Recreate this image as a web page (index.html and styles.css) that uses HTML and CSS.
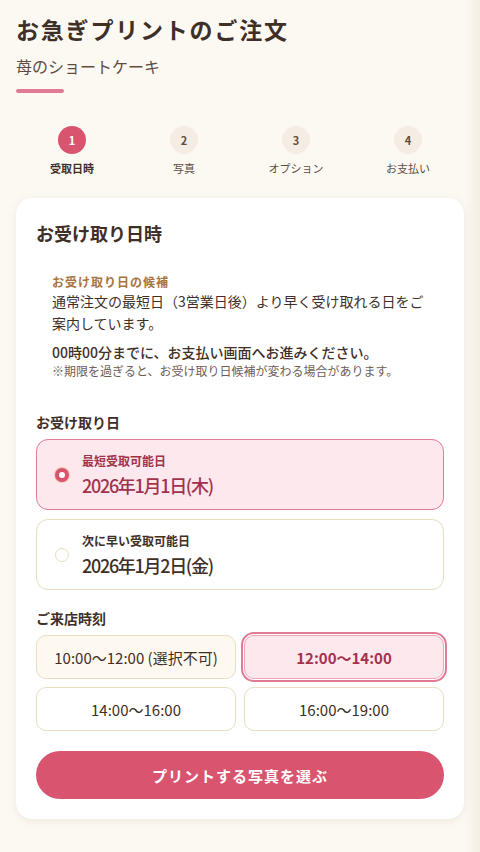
FILE: index.html
```html
<!DOCTYPE html>
<html lang="ja">
<head>
  <meta charset="UTF-8" />
  <title>お急ぎプリントのご注文</title>
  <meta name="viewport" content="width=device-width, initial-scale=1.0" />
  <link rel="stylesheet" href="styles.css">
</head>
<body>
  <main class="page">
    <header class="page-head">
      <h1>お急ぎプリントのご注文</h1>
      <p class="subtitle">苺のショートケーキ</p>
      <span class="accent-bar"></span>
    </header>

    <ol class="steps">
      <li class="step active"><span class="step-num">1</span><span class="step-label">受取日時</span></li>
      <li class="step"><span class="step-num">2</span><span class="step-label">写真</span></li>
      <li class="step"><span class="step-num">3</span><span class="step-label">オプション</span></li>
      <li class="step"><span class="step-num">4</span><span class="step-label">お支払い</span></li>
    </ol>

    <section class="card">
      <h2 class="card-title">お受け取り日時</h2>

      <div class="info">
        <p class="info-label">お受け取り日の候補</p>
        <p class="info-text">通常注文の最短日（3営業日後）より早く受け取れる日をご案内しています。</p>
        <p class="info-deadline">00時00分までに、お支払い画面へお進みください。</p>
        <p class="info-note">※期限を過ぎると、お受け取り日候補が変わる場合があります。</p>
      </div>

      <h3 class="field-label">お受け取り日</h3>
      <div class="date-list">
        <label class="date-option selected">
          <span class="radio"></span>
          <span class="date-body">
            <span class="date-kind">最短受取可能日</span>
            <span class="date-value">2026年1月1日(木)</span>
          </span>
        </label>
        <label class="date-option">
          <span class="radio"></span>
          <span class="date-body">
            <span class="date-kind">次に早い受取可能日</span>
            <span class="date-value">2026年1月2日(金)</span>
          </span>
        </label>
      </div>

      <h3 class="field-label time-label">ご来店時刻</h3>
      <div class="time-grid">
        <button class="slot disabled">10:00〜12:00 (選択不可)</button>
        <button class="slot selected">12:00〜14:00</button>
        <button class="slot">14:00〜16:00</button>
        <button class="slot">16:00〜19:00</button>
      </div>

      <button class="primary-btn">プリントする写真を選ぶ</button>
    </section>
  </main>
</body>
</html>
```

FILE: styles.css
```css
:root {
  --bg-color: #fcf9f3;
  --text-color: #3f2f27;
  --sub-text: #5f4d43;
  --pink: #d9546f;
  --pink-line: #e07a95;
  --pink-soft: #fce8ed;
  --pink-dark: #a3324f;
  --beige-line: #ecdcc0;
  --brown-label: #a8743f;
}

* {
  box-sizing: border-box;
  margin: 0;
  padding: 0;
}

html, body {
  min-height: 100%;
}

body {
  background: linear-gradient(to right, var(--bg-color) calc(100% - 15px), #f3ede3 100%);
  color: var(--text-color);
  font-family: "Noto Sans CJK JP", "Noto Sans", sans-serif;
  min-height: 100vh;
}

.page {
  padding: 12px 16px 32px;
}

.page-head h1 {
  font-size: 23px;
  line-height: 34px;
  font-weight: 700;
  letter-spacing: 1.8px;
}

.subtitle {
  margin-top: 8px;
  font-size: 16px;
  line-height: 24px;
  color: var(--sub-text);
}

.accent-bar {
  display: block;
  width: 48px;
  height: 4px;
  margin-top: 11px;
  border-radius: 2px;
  background-color: var(--pink-line);
}

.steps {
  list-style: none;
  display: grid;
  grid-template-columns: repeat(4, 1fr);
  margin-top: 33px;
}

.step {
  display: flex;
  flex-direction: column;
  align-items: center;
  gap: 6px;
}

.step-num {
  width: 28px;
  height: 28px;
  border-radius: 50%;
  background-color: #f5ece4;
  color: var(--sub-text);
  font-size: 11px;
  font-weight: 700;
  display: flex;
  align-items: center;
  justify-content: center;
}

.step-label {
  font-size: 11px;
  line-height: 16px;
  color: var(--sub-text);
}

.step.active .step-num {
  background-color: var(--pink);
  color: #fff;
}

.step.active .step-label {
  font-weight: 700;
  color: var(--text-color);
}

.card {
  margin-top: 22px;
  background-color: #fff;
  border-radius: 16px;
  padding: 22px 20px 20px;
  box-shadow: 0 2px 8px rgba(120, 90, 60, 0.1);
}

.card-title {
  font-size: 18px;
  line-height: 26px;
  font-weight: 700;
}

.info {
  margin-top: 12px;
  padding: 16px;
}

.info-label {
  font-size: 12px;
  line-height: 16px;
  font-weight: 700;
  letter-spacing: 1px;
  color: var(--brown-label);
}

.info-text {
  font-size: 14px;
  line-height: 22px;
}

.info-deadline {
  margin-top: 7px;
  font-size: 14px;
  line-height: 22px;
  font-weight: 500;
}

.info-note {
  font-size: 12px;
  line-height: 16px;
  color: #6f5d52;
}

.field-label {
  margin-top: 17px;
  font-size: 14px;
  line-height: 20px;
  font-weight: 700;
}

.date-list {
  margin-top: 7px;
  display: flex;
  flex-direction: column;
  gap: 9px;
}

.date-option {
  display: flex;
  align-items: center;
  gap: 13px;
  height: 71px;
  padding: 0 18px;
  border: 1px solid var(--beige-line);
  border-radius: 12px;
  background-color: #fff;
}

.radio {
  flex: none;
  width: 14px;
  height: 14px;
  border-radius: 50%;
  border: 1px solid var(--beige-line);
  background-color: #fff;
}

.date-body {
  display: flex;
  flex-direction: column;
  gap: 2px;
  padding-top: 1px;
}

.date-kind {
  font-size: 12px;
  line-height: 18px;
  font-weight: 700;
}

.date-value {
  font-size: 18px;
  line-height: 26px;
  font-weight: 500;
  letter-spacing: -1.3px;
}

.date-option.selected {
  background-color: var(--pink-soft);
  border-color: var(--pink-line);
  color: var(--pink-dark);
}

.date-option.selected .radio {
  border: 4px solid var(--pink);
  box-shadow: 0 0 0 1px #f0c7b4;
}

.time-label {
  margin-top: 18px;
}

.time-grid {
  margin-top: 7px;
  display: grid;
  grid-template-columns: 1fr 1fr;
  gap: 8px;
}

.slot {
  height: 44px;
  border: 1px solid var(--beige-line);
  border-radius: 10px;
  background-color: #fff;
  color: var(--text-color);
  font-family: inherit;
  font-size: 15px;
}

.slot.disabled {
  background-color: #fdf9f1;
}

.slot.selected {
  background-color: var(--pink-soft);
  border-color: #eea5b6;
  color: var(--pink-dark);
  font-weight: 700;
  box-shadow: 0 0 0 1px #fff, 0 0 0 3px var(--pink-line);
}

.primary-btn {
  display: block;
  width: 100%;
  height: 48px;
  margin-top: 20px;
  border: none;
  border-radius: 24px;
  background-color: var(--pink);
  color: #fff;
  font-family: inherit;
  font-size: 15px;
  font-weight: 700;
  letter-spacing: 1px;
}
```
